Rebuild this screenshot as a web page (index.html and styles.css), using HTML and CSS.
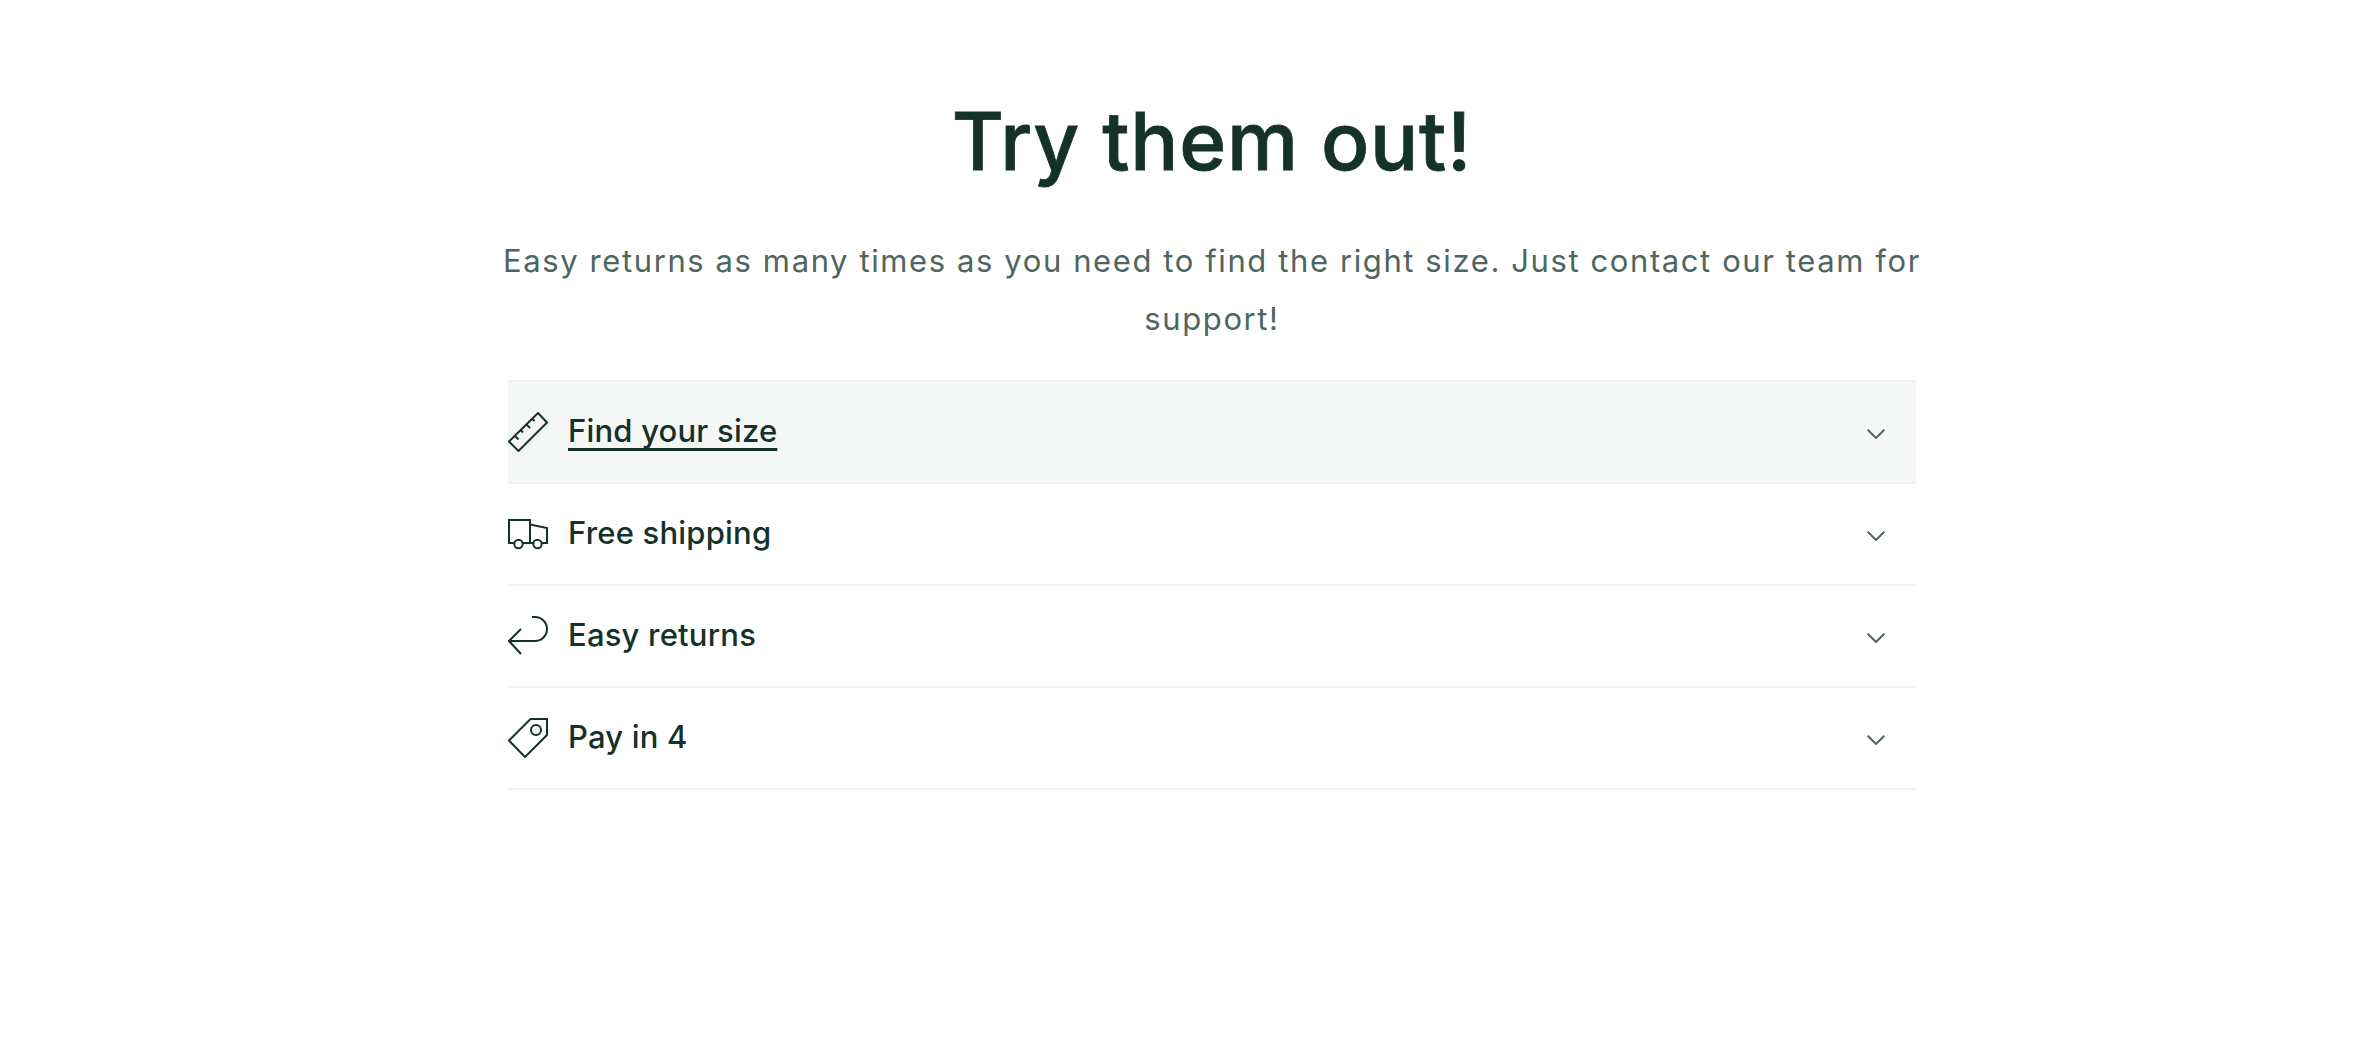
FILE: index.html
```html
<!DOCTYPE html>
<html lang="en">
<head>
  <meta charset="UTF-8">
  <meta name="viewport" content="width=device-width, initial-scale=1.0">
  <title>Try them out!</title>
  <link rel="stylesheet" href="styles.css">
</head>
<body>
  <section class="try-section">
    <h2 class="try-title">Try them out!</h2>
    <p class="try-text">Easy returns as many times as you need to find the right size. Just contact our team for support!</p>

    <div class="accordion">
      <!-- Rows -->
      <div class="accordion-row active">
        <svg class="row-icon" viewBox="0 0 40 40">
          <path d="M1 29.500 30 1 39 10.500 10.500 39Z"/>
          <path d="M6.800 23.800 10.500 27.500M12.600 18.100 15 20.500M18.400 12.400 22 16M24.200 6.700 26.600 9.100"/>
        </svg>
        <span class="row-label">Find your size</span>
        <svg class="row-chevron" viewBox="0 0 18 10"><path d="M.7.7 9 9 17.300.7"/></svg>
      </div>
      <div class="accordion-row">
        <svg class="row-icon" viewBox="0 0 40 30">
          <path d="M6 24H1V1H22V24H15M22 5.500 39 9V24H34M22 24H25"/>
          <circle cx="10.500" cy="25" r="4.200"/>
          <circle cx="29.500" cy="25" r="4.200"/>
        </svg>
        <span class="row-label">Free shipping</span>
        <svg class="row-chevron" viewBox="0 0 18 10"><path d="M.7.7 9 9 17.300.7"/></svg>
      </div>
      <div class="accordion-row">
        <svg class="row-icon" viewBox="0 0 40 40">
          <path d="M13 13 1 25 13 38M1 25H27A12 12 0 0 0 27 1H24"/>
        </svg>
        <span class="row-label">Easy returns</span>
        <svg class="row-chevron" viewBox="0 0 18 10"><path d="M.7.7 9 9 17.300.7"/></svg>
      </div>
      <div class="accordion-row">
        <svg class="row-icon" viewBox="0 0 40 40">
          <path d="M1 22.500 22.500 1H39V17L17 39Z"/>
          <circle cx="28" cy="12" r="5"/>
        </svg>
        <span class="row-label">Pay in 4</span>
        <svg class="row-chevron" viewBox="0 0 18 10"><path d="M.7.7 9 9 17.300.7"/></svg>
      </div>
    </div>
  </section>
</body>
</html>
```

FILE: styles.css
```css
* {
  margin: 0;
  padding: 0;
  box-sizing: border-box;
}

body {
  font-family: 'Inter', sans-serif;
  background-color: #ffffff;
  color: #14322a;
  min-height: 100vh;
  overflow-x: hidden;
  padding-left: 44px;
}

.try-section {
  width: 1420px;
  margin: 0 auto;
  padding-top: 93px;
  text-align: center;
}

.try-title {
  font-size: 80px;
  line-height: 96px;
  font-weight: 500;
  letter-spacing: 0.8px;
  -webkit-text-stroke: 0.8px #14322a;
  margin-bottom: 43px;
}

.try-text {
  font-size: 31px;
  line-height: 58px;
  letter-spacing: 1.6px;
  color: #4f6660;
  margin-bottom: 32px;
}

.accordion {
  width: 1408px;
  margin: 0 auto;
  border-top: 2px solid #f0f2f1;
  text-align: left;
}

.accordion-row {
  display: flex;
  align-items: center;
  height: 102px;
  border-bottom: 2px solid #f0f2f1;
  padding-right: 31px;
}

.accordion-row.active {
  background-color: #f5f7f6;
}

.row-icon {
  width: 40px;
  height: 40px;
  flex-shrink: 0;
  margin-right: 20px;
  fill: none;
  stroke: #14322a;
  stroke-width: 2;
}

.row-label {
  flex: 1;
  font-size: 31px;
  line-height: 42px;
  font-weight: 500;
  letter-spacing: 0.2px;
  margin-bottom: 2px;
}

.active .row-label {
  text-decoration: underline;
  text-decoration-thickness: 3px;
  text-decoration-skip-ink: none;
  text-underline-offset: 6px;
}

.row-chevron {
  width: 18px;
  height: 10px;
  margin-top: 4px;
  fill: none;
  stroke: #4f6660;
  stroke-width: 2;
}
```
